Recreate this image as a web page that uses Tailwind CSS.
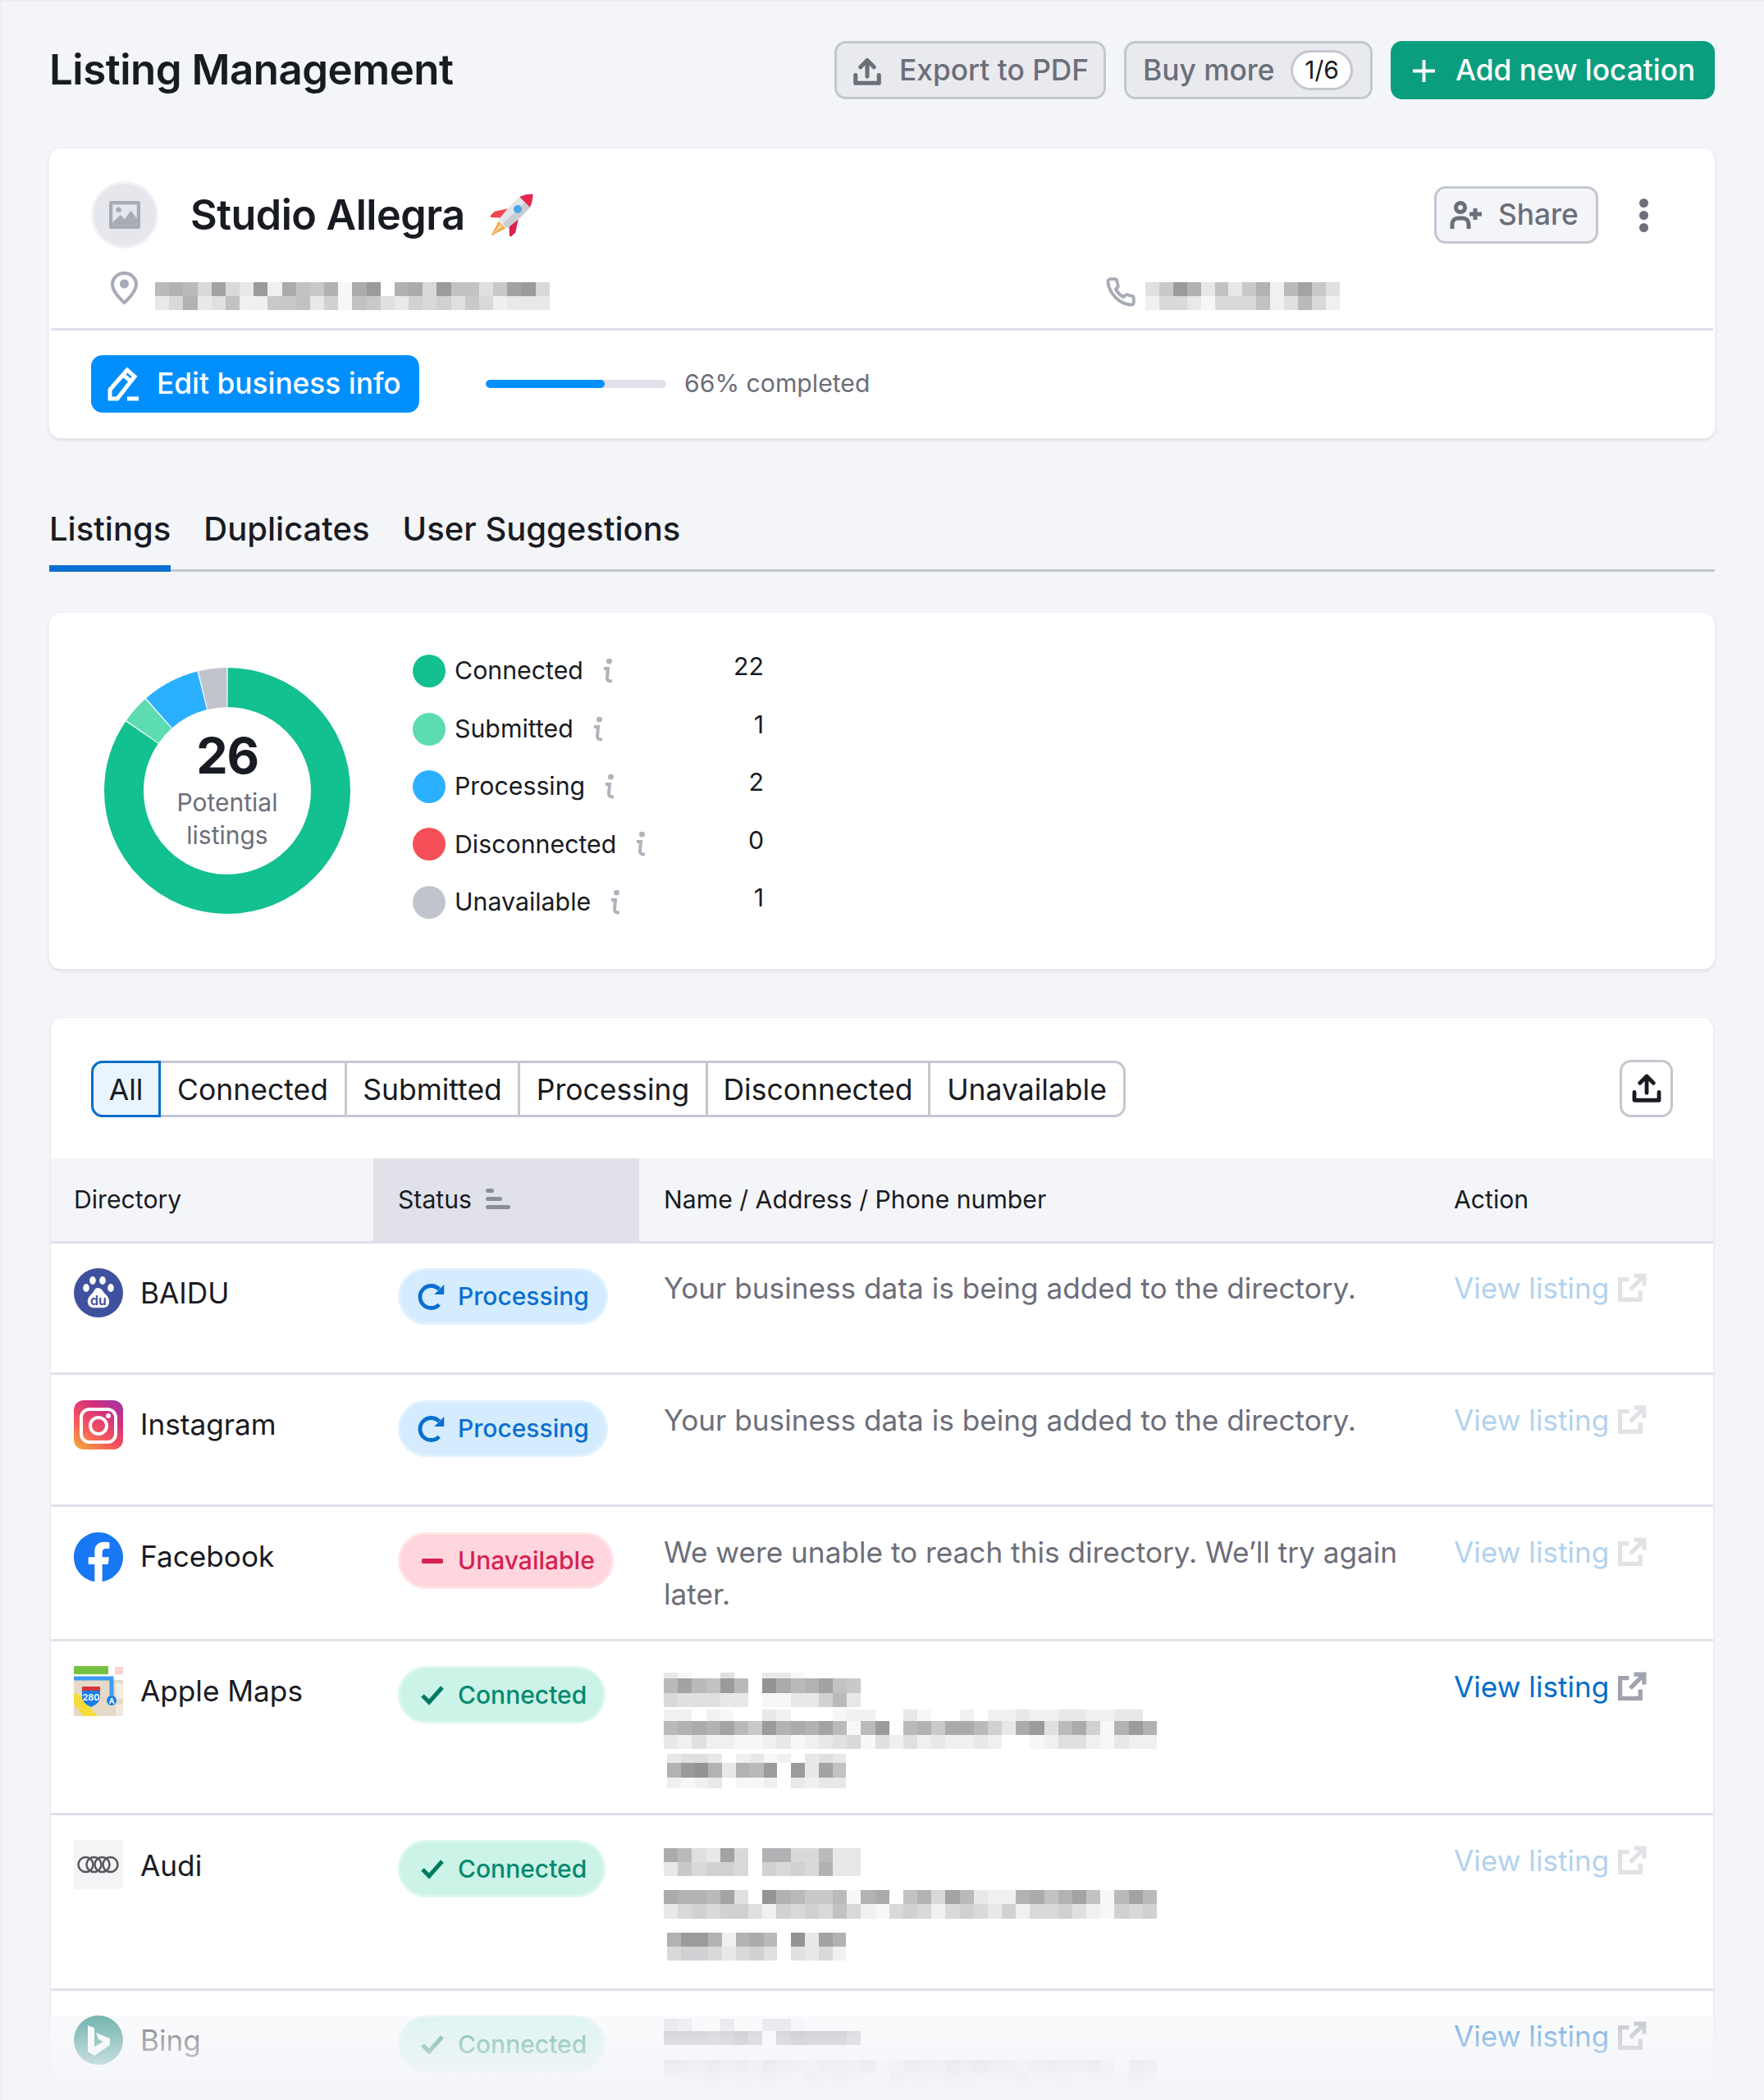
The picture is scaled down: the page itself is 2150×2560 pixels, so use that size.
<!DOCTYPE html>
<html lang="en">
  <head>
    <meta charset="UTF-8" />
    <title>Listing Management</title>
    <script src="https://cdn.jsdelivr.net/npm/@tailwindcss/browser@4"></script>
  </head>
  <body class="bg-[#f4f5f9] text-[#191b23] font-['Inter',sans-serif]">
    <main class="relative h-[2560px] overflow-hidden border-l-2 border-t-2 border-[#ebedf1] pl-[58px] pr-[60px] pt-[48px]">
      <!-- Page header -->
      <div class="flex h-[71px] items-center justify-between">
        <h1 class="text-[51px] font-semibold tracking-[-0.01em]">Listing Management</h1>
        <div class="flex items-center gap-[22px]">
          <button class="flex h-[71px] w-[331px] items-center gap-[21px] rounded-[14px] border-[3px] border-[#c4c7cf] bg-[#e9eaee] pl-[19px] pt-[2px] text-[35.300px] font-medium text-[#6c6e79]">
            <svg class="h-[38px] w-[36px]" viewBox="0 0 24 24" fill="none" stroke="#6c6e79" stroke-width="3.400" stroke-linecap="round" stroke-linejoin="round"><path d="M12 16V3M6.500 8.500 12 3l5.500 5.500M2.500 15v6.500h19V15" /></svg>
            Export to PDF
          </button>
          <button class="flex h-[71px] w-[303px] items-center justify-between rounded-[14px] border-[3px] border-[#c4c7cf] bg-[#e9eaee] pl-[20px] pr-[21px] text-[35.300px] font-medium text-[#6c6e79]">
            <span class="pt-[2px]">Buy more</span>
            <span class="flex h-[49px] w-[76px] items-center justify-center rounded-full border-[3px] border-[#c4c7cf] bg-white text-[30px] font-normal text-[#191b23]">1/6</span>
          </button>
          <button class="flex h-[71px] w-[395px] items-center gap-[25px] rounded-[14px] bg-[#0a9e7f] pl-[27px] pt-[2px] text-[35.300px] font-medium text-white">
            <svg class="h-[27px] w-[27px]" viewBox="0 0 24 24" fill="none" stroke="#fff" stroke-width="3.500"><path d="M12 0v24M0 12h24" /></svg>
            Add new location
          </button>
        </div>
      </div>

      <!-- Business card -->
      <section class="mt-[60px] h-[353px] rounded-[14px] border-2 border-white bg-white shadow-[0_0_0_1px_#eceef3,0_2px_4px_rgba(25,27,35,0.14)]">
        <div class="flex h-[220px] flex-col border-b-[3px] border-[#e0e1e9] pl-[49px] pr-[74px]">
          <div class="flex items-center pt-[38px]">
            <div class="flex h-[82px] w-[82px] items-center justify-center rounded-full border-[3px] border-[#f1f2f5] bg-[#e6e7ed]">
              <svg class="h-[38px] w-[38px]" viewBox="0 0 36 36"><rect x="0" y="2" width="36" height="32" rx="2" fill="#a8abb5" /><rect x="4" y="6" width="28" height="24" fill="#e6e7ed" /><circle cx="11" cy="12" r="3" fill="#a8abb5" /><path d="M4 27 13 18l5 5 7-10 7 9v8H4z" fill="#a8abb5" /></svg>
            </div>
            <h2 class="ml-[39px] text-[50.300px] font-semibold tracking-[-0.01em]">Studio Allegra</h2>
            <svg class="ml-[31px] h-[52px] w-[52px]" viewBox="0 0 52 52">
              <g transform="rotate(45 26 26)">
                <path d="M20 43h12l-6 19z" fill="#f2a03c" />
                <path d="M23 44l3 15 3-15z" fill="#f7cf8a" />
                <path d="M17 24 8 38v10l11-10z" fill="#f2484f" />
                <path d="M35 24l9 14v10L33 38z" fill="#dc1f4d" />
                <path d="M17 4h18c1 12 0 28-2 38H19c-2-10-3-26-2-38z" fill="#e3e5e9" />
                <path d="M26 4h9c1 12 0 28-2 38h-7z" fill="#c9ccd2" />
                <path d="M26-10c7 7 9 14 9 14H17s2-7 9-14z" fill="#e6284f" />
                <circle cx="26" cy="16" r="5" fill="#4ba5ec" />
              </g>
            </svg>
            <button class="ml-auto flex h-[70px] w-[200px] items-center gap-[20px] rounded-[14px] border-[3px] border-[#c4c7cf] bg-[#f4f5f9] pl-[15px] text-[35.300px] font-medium text-[#6c6e79]">
              <svg class="h-[34px] w-[40px]" viewBox="0 0 40 34" fill="none" stroke="#6c6e79" stroke-width="5"><circle cx="14" cy="8" r="5.500" /><path d="M4 34v-6a7 7 0 0 1 7-7h6a7 7 0 0 1 7 7v6" /><path d="M32 9v14M25 16h15" /></svg>
              Share
            </button>
            <div class="ml-[44px] flex w-[22px] flex-col items-center gap-[4px]">
              <span class="h-[11px] w-[11px] rounded-full bg-[#6c6e79]"></span>
              <span class="h-[11px] w-[11px] rounded-full bg-[#6c6e79]"></span>
              <span class="h-[11px] w-[11px] rounded-full bg-[#6c6e79]"></span>
            </div>
          </div>
          <div class="mt-[30px] flex">
            <div class="flex w-[1236px] items-start">
              <svg class="ml-[23px] mt-[-2px] h-[40px] w-[35px]" viewBox="0 0 35 40" fill="none" stroke="#a8abb5" stroke-width="4"><path d="M17.500 38C11 32 3 24 3 15.500a14.500 13.500 0 0 1 29 0C32 24 24 32 17.500 38z" /><circle cx="17.500" cy="15" r="3.500" fill="#a8abb5" /></svg>
              <div class="ml-[20px] mt-[11px]" data-mosaic="17:656a3ac2d4785e42f54a277b832a 17:ca5cb7dd887c9e78bc9a9b8adccc"></div>
            </div>
            <div class="flex items-start">
              <svg class="mt-[4px] h-[38px] w-[38px]" viewBox="0 0 24 24" fill="none" stroke="#a8abb5" stroke-width="2.400" stroke-linejoin="round"><path d="M22 16.920v3a2 2 0 0 1-2.180 2 19.790 19.790 0 0 1-8.630-3.070 19.500 19.500 0 0 1-6-6 19.790 19.790 0 0 1-3.070-8.670A2 2 0 0 1 4.110 2h3a2 2 0 0 1 2 1.720 12.840 12.840 0 0 0 .7 2.810 2 2 0 0 1-.45 2.110L8.090 9.910a16 16 0 0 0 6 6l1.270-1.270a2 2 0 0 1 2.110-.45 12.840 12.840 0 0 0 2.810.7A2 2 0 0 1 22 16.92z" /></svg>
              <div class="ml-[11px] mt-[11px]" data-mosaic="17:b825c7c85d638b 17:daaceaaa7db6ad" data-cell="16.900"></div>
            </div>
          </div>
        </div>
        <div class="flex h-[130px] items-center px-[49px]">
          <button class="flex h-[70px] w-[400px] items-center gap-[20px] rounded-[14px] bg-[#008ffd] pl-[20px] text-[35.300px] font-medium text-white">
            <svg class="h-[42px] w-[40px]" viewBox="0 0 40 42" fill="none" stroke="#fff" stroke-width="5"><path d="M3 39V28L24 4l9 8L12 39zM19 10l10 8M24 39h14" /></svg>
            Edit business info
          </button>
          <div class="ml-[81px] h-[10px] w-[220px] overflow-hidden rounded-full bg-[#e0e1e9]">
            <div class="h-full w-[66%] rounded-full bg-[#008ffd]"></div>
          </div>
          <span class="ml-[22px] text-[30.200px] text-[#6c6e79]">66% completed</span>
        </div>
      </section>

      <!-- Tabs -->
      <nav class="mt-[73px] flex h-[90px] gap-[40px] border-b-[3px] border-[#c4c7cf] text-[40px] font-medium leading-[76px]">
        <div class="relative">
          <span>Listings</span>
          <div class="absolute bottom-[-3px] left-0 h-[8px] w-full bg-[#0a6fd0]"></div>
        </div>
        <span>Duplicates</span>
        <span>User Suggestions</span>
      </nav>

      <!-- Summary card -->
      <section class="mt-[50px] flex h-[434px] rounded-[14px] border-2 border-white bg-white pl-[65px] pt-[65px] shadow-[0_0_0_1px_#eceef3,0_2px_4px_rgba(25,27,35,0.14)]">
        <div class="relative h-[300px] w-[300px]">
          <svg class="h-[300px] w-[300px]" viewBox="0 0 300 300" fill="none" stroke-width="48">
            <g transform="rotate(-90 150 150)">
              <circle cx="150" cy="150" r="126" pathLength="26" stroke="#13c08f" stroke-dasharray="21.960 4.040" stroke-dashoffset="-0.020" />
              <circle cx="150" cy="150" r="126" pathLength="26" stroke="#5cdcb0" stroke-dasharray="0.960 25.040" stroke-dashoffset="-22.020" />
              <circle cx="150" cy="150" r="126" pathLength="26" stroke="#2bb0ff" stroke-dasharray="1.960 24.040" stroke-dashoffset="-23.020" />
              <circle cx="150" cy="150" r="126" pathLength="26" stroke="#c1c4cd" stroke-dasharray="0.960 25.040" stroke-dashoffset="-25.020" />
            </g>
          </svg>
          <div class="absolute inset-0 flex flex-col items-center pt-[62px] text-center">
            <span class="text-[61px] font-bold leading-[90px] tracking-[-0.02em]">26</span>
            <span class="mt-[-8px] text-[30px] leading-[40px] text-[#6c6e79]">Potential<br />listings</span>
          </div>
        </div>
        <div class="ml-[76px] mt-[-31px] w-[428px] text-[30.300px]">
          <div class="flex h-[70.400px] items-center">
            <span class="h-[40px] w-[40px] rounded-full bg-[#13c08f]"></span>
            <span class="ml-[11px]">Connected</span>
            <svg class="ml-[22px] h-[30px] w-[16px]" viewBox="0 0 16 30" fill="none" stroke="#b0b3bc" stroke-width="4"><circle cx="9.500" cy="3" r="1.500" fill="#b0b3bc" /><path d="M3 12h5L7 24q0 3.500 6 3.500" /></svg>
            <span class="ml-auto mt-[-10px]">22</span>
          </div>
          <div class="flex h-[70.400px] items-center">
            <span class="h-[40px] w-[40px] rounded-full bg-[#5cdcb0]"></span>
            <span class="ml-[11px]">Submitted</span>
            <svg class="ml-[22px] h-[30px] w-[16px]" viewBox="0 0 16 30" fill="none" stroke="#b0b3bc" stroke-width="4"><circle cx="9.500" cy="3" r="1.500" fill="#b0b3bc" /><path d="M3 12h5L7 24q0 3.500 6 3.500" /></svg>
            <span class="ml-auto mt-[-10px]">1</span>
          </div>
          <div class="flex h-[70.400px] items-center">
            <span class="h-[40px] w-[40px] rounded-full bg-[#2bb0ff]"></span>
            <span class="ml-[11px]">Processing</span>
            <svg class="ml-[22px] h-[30px] w-[16px]" viewBox="0 0 16 30" fill="none" stroke="#b0b3bc" stroke-width="4"><circle cx="9.500" cy="3" r="1.500" fill="#b0b3bc" /><path d="M3 12h5L7 24q0 3.500 6 3.500" /></svg>
            <span class="ml-auto mt-[-10px]">2</span>
          </div>
          <div class="flex h-[70.400px] items-center">
            <span class="h-[40px] w-[40px] rounded-full bg-[#f54f58]"></span>
            <span class="ml-[11px]">Disconnected</span>
            <svg class="ml-[22px] h-[30px] w-[16px]" viewBox="0 0 16 30" fill="none" stroke="#b0b3bc" stroke-width="4"><circle cx="9.500" cy="3" r="1.500" fill="#b0b3bc" /><path d="M3 12h5L7 24q0 3.500 6 3.500" /></svg>
            <span class="ml-auto mt-[-10px]">0</span>
          </div>
          <div class="flex h-[70.400px] items-center">
            <span class="h-[40px] w-[40px] rounded-full bg-[#c1c4cd]"></span>
            <span class="ml-[11px]">Unavailable</span>
            <svg class="ml-[22px] h-[30px] w-[16px]" viewBox="0 0 16 30" fill="none" stroke="#b0b3bc" stroke-width="4"><circle cx="9.500" cy="3" r="1.500" fill="#b0b3bc" /><path d="M3 12h5L7 24q0 3.500 6 3.500" /></svg>
            <span class="ml-auto mt-[-10px]">1</span>
          </div>
        </div>
      </section>

      <!-- Directories table -->
      <section class="mt-[60px] rounded-t-[14px] border-x-2 border-t-2 border-[#eceef3] border-t-white bg-white shadow-[0_-1px_0_#eceef3]">
        <div class="flex h-[169px] items-start justify-between px-[49px] pt-[49px]">
          <div class="flex h-[70px] pt-[1px] text-[35.500px]">
            <span class="flex w-[85px] items-center justify-center rounded-l-[14px] border-[3px] border-[#006dca] bg-[#e9f5fe] pt-[2px]">All</span>
            <span class="flex w-[227px] items-center justify-center border-y-[3px] border-r-[3px] border-[#c4c7cf] pt-[2px]">Connected</span>
            <span class="flex w-[211px] items-center justify-center border-y-[3px] border-r-[3px] border-[#c4c7cf] pt-[2px]">Submitted</span>
            <span class="flex w-[229px] items-center justify-center border-y-[3px] border-r-[3px] border-[#c4c7cf] pt-[2px]">Processing</span>
            <span class="flex w-[271px] items-center justify-center border-y-[3px] border-r-[3px] border-[#c4c7cf] pt-[2px]">Disconnected</span>
            <span class="flex w-[238px] items-center justify-center rounded-r-[14px] border-y-[3px] border-r-[3px] border-[#c4c7cf] pt-[2px]">Unavailable</span>
          </div>
          <button class="flex h-[70px] w-[65px] items-center justify-center rounded-[14px] border-[3px] border-[#c4c7cf] bg-white">
            <svg class="h-[36px] w-[36px]" viewBox="0 0 24 24" fill="none" stroke="#191b23" stroke-width="3.200" stroke-linecap="round" stroke-linejoin="round"><path d="M12 15.500V2M6.500 7.500 12 2l5.500 5.500M2 15v6.500h20V15" /></svg>
          </button>
        </div>

        <div class="grid h-[104px] grid-cols-[393px_324px_963px_346px] border-b-[3px] border-[#e0e1e9] bg-[#f4f5f9] text-[30.200px]">
          <div class="flex items-center pl-[28px]">Directory</div>
          <div class="flex items-center gap-[17px] bg-[#e0e1e9] pl-[30px]">
            Status
            <div class="mt-[-2px] flex flex-col gap-[5px]">
              <span class="h-[5px] w-[10px] rounded-full bg-[#8b8e98]"></span>
              <span class="h-[5px] w-[20px] rounded-full bg-[#8b8e98]"></span>
              <span class="h-[5px] w-[30px] rounded-full bg-[#8b8e98]"></span>
            </div>
          </div>
          <div class="flex items-center pl-[30px]">Name / Address / Phone number</div>
          <div class="flex items-center pl-[30px]">Action</div>
        </div>

        <!-- BAIDU -->
        <div class="grid h-[160px] grid-cols-[393px_324px_963px_346px] border-b-[3px] border-[#e0e1e9] text-[35.200px] leading-[51px]">
          <div class="flex h-[90px] items-center gap-[21px] pl-[28px] pt-[30px]">
            <svg class="h-[60px] w-[60px]" viewBox="0 0 60 60"><circle cx="30" cy="30" r="30" fill="#3f519e" /><g fill="#fff"><ellipse cx="23" cy="15" rx="3.800" ry="5" /><ellipse cx="35" cy="15" rx="3.800" ry="5" /><ellipse cx="15" cy="24" rx="3.800" ry="5" /><ellipse cx="45" cy="24" rx="3.800" ry="5" /><path d="M29 24c4 0 6 3 8 6 3 3 7 7 6 12-1 6-6 7-13 6-7 1-12 0-13-6-1-5 3-9 6-12 2-3 3-6 6-6z" /></g><text x="30" y="45" text-anchor="middle" font-size="16" font-family="Inter" font-weight="600" fill="#3f519e">du</text></svg>
            <span>BAIDU</span>
          </div>
          <div class="pl-[30px] pt-[30px]">
            <span class="flex h-[69px] w-[256px] items-center gap-[13px] rounded-full border-[3px] border-[#e0f2ff] bg-[#d4ecfe] pl-[21px] text-[30px] font-medium text-[#0a6fd0]">
              <svg class="h-[36px] w-[36px] shrink-0" viewBox="0 0 24 24" fill="none" stroke="#0a6fd0" stroke-width="3.200"><path d="M17.500 5.800A9 9 0 1 0 17.500 18.200" /><path d="M21.500 2v8h-8z" fill="#0a6fd0" stroke="none" /></svg>
              Processing
            </span>
          </div>
          <div class="pl-[30px] pt-[29px] text-[#6c6e79]">Your business data is being added to the directory.</div>
          <div class="pl-[30px] pt-[29px]">
            <a class="flex items-center gap-[9px] text-[#006dca] opacity-30">View listing
              <svg class="h-[37px] w-[37px]" viewBox="0 0 24 24" fill="none" stroke="#a0a3ad" stroke-width="3.400"><path d="M10 5H3v16h16v-7" /><path d="M14 2h8v8M21.500 2.500 11 13" /></svg>
            </a>
          </div>
        </div>

        <!-- Instagram -->
        <div class="grid h-[161px] grid-cols-[393px_324px_963px_346px] border-b-[3px] border-[#e0e1e9] text-[35.200px] leading-[51px]">
          <div class="flex h-[91px] items-center gap-[21px] pl-[28px] pt-[31px]">
            <svg class="h-[60px] w-[60px]" viewBox="0 0 60 60">
              <defs><linearGradient id="ig" x1="0.100" y1="1" x2="0.800" y2="0"><stop offset="0" stop-color="#f4a53d" /><stop offset="0.400" stop-color="#f5535f" /><stop offset="0.750" stop-color="#d4317c" /><stop offset="1" stop-color="#a9339a" /></linearGradient></defs>
              <rect width="60" height="60" rx="12" fill="url(#ig)" />
              <rect x="9" y="11" width="42" height="40" rx="10" fill="none" stroke="#fff" stroke-width="4" />
              <circle cx="30" cy="31" r="10" fill="none" stroke="#fff" stroke-width="4" />
              <circle cx="42" cy="19" r="3" fill="#fff" />
            </svg>
            <span class="mt-[-2px]">Instagram</span>
          </div>
          <div class="pl-[30px] pt-[31px]">
            <span class="flex h-[69px] w-[256px] items-center gap-[13px] rounded-full border-[3px] border-[#e0f2ff] bg-[#d4ecfe] pl-[21px] text-[30px] font-medium text-[#0a6fd0]">
              <svg class="h-[36px] w-[36px] shrink-0" viewBox="0 0 24 24" fill="none" stroke="#0a6fd0" stroke-width="3.200"><path d="M17.500 5.800A9 9 0 1 0 17.500 18.200" /><path d="M21.500 2v8h-8z" fill="#0a6fd0" stroke="none" /></svg>
              Processing
            </span>
          </div>
          <div class="pl-[30px] pt-[30px] text-[#6c6e79]">Your business data is being added to the directory.</div>
          <div class="pl-[30px] pt-[30px]">
            <a class="flex items-center gap-[9px] text-[#006dca] opacity-30">View listing
              <svg class="h-[37px] w-[37px]" viewBox="0 0 24 24" fill="none" stroke="#a0a3ad" stroke-width="3.400"><path d="M10 5H3v16h16v-7" /><path d="M14 2h8v8M21.500 2.500 11 13" /></svg>
            </a>
          </div>
        </div>

        <!-- Facebook -->
        <div class="grid h-[164px] grid-cols-[393px_324px_963px_346px] border-b-[3px] border-[#e0e1e9] text-[35.200px] leading-[51px]">
          <div class="flex h-[91px] items-center gap-[21px] pl-[28px] pt-[31px]">
            <svg class="h-[60px] w-[60px]" viewBox="0 0 24 24"><path fill="#1877f2" d="M24 12.070C24 5.400 18.630 0 12 0S0 5.400 0 12.070c0 6.030 4.390 11.020 10.130 11.930v-8.440H7.080v-3.490h3.050V9.410c0-3.020 1.790-4.690 4.530-4.690 1.310 0 2.690.24 2.690.24v2.970h-1.520c-1.490 0-1.960.93-1.960 1.880v2.260h3.330l-.53 3.490h-2.800V24C19.610 23.090 24 18.100 24 12.070z" /></svg>
            <span class="mt-[-1px]">Facebook</span>
          </div>
          <div class="pl-[30px] pt-[31px]">
            <span class="flex h-[69px] w-[263px] items-center gap-[13px] rounded-full border-[3px] border-[#ffe4e8] bg-[#ffd6dd] pl-[21px] text-[30px] font-medium text-[#d62050]">
              <svg class="h-[36px] w-[36px] shrink-0" viewBox="0 0 36 36"><rect x="5" y="15" width="26" height="6" rx="2" fill="#d62050" /></svg>
              Unavailable
            </span>
          </div>
          <div class="pl-[30px] pr-[30px] pt-[30px] text-[#6c6e79]">We were unable to reach this directory. We’ll try again later.</div>
          <div class="pl-[30px] pt-[30px]">
            <a class="flex items-center gap-[9px] text-[#006dca] opacity-30">View listing
              <svg class="h-[37px] w-[37px]" viewBox="0 0 24 24" fill="none" stroke="#a0a3ad" stroke-width="3.400"><path d="M10 5H3v16h16v-7" /><path d="M14 2h8v8M21.500 2.500 11 13" /></svg>
            </a>
          </div>
        </div>

        <!-- Apple Maps -->
        <div class="grid h-[212px] grid-cols-[393px_324px_963px_346px] border-b-[3px] border-[#e0e1e9] text-[35.200px] leading-[51px]">
          <div class="flex h-[91px] items-center gap-[21px] pl-[28px] pt-[30px]">
            <svg class="h-[61px] w-[60px]" viewBox="0 0 60 61">
              <rect x="0" y="17" width="60" height="44" rx="2" fill="#e5dac6" />
              <rect x="0" y="0" width="42" height="10" rx="1" fill="#76c044" />
              <rect x="50" y="1" width="10" height="9" fill="#fbd3d0" />
              <path d="M0 15h46v30" fill="none" stroke="#3c9bf2" stroke-width="5" />
              <rect x="51" y="21" width="9" height="19" fill="#fff" opacity="0.500" />
              <rect x="51" y="47" width="9" height="14" fill="#fff" opacity="0.400" />
              <path d="M0 33c8 1 13 6 18 14 3 6 7 10 11 14H11C7 55 4 50 0 47z" fill="#f6dd3b" />
              <path d="M10 27h22v10c0 7-5 10-11 13-6-3-11-6-11-13z" fill="#1a7ee8" />
              <rect x="10" y="25" width="22" height="5" fill="#d5343b" />
              <text x="21" y="42" text-anchor="middle" font-size="11" font-family="Inter" font-weight="600" fill="#fff">280</text>
              <circle cx="46" cy="42" r="6" fill="#1a7ee8" />
              <text x="46" y="46" text-anchor="middle" font-size="9" font-family="Inter" font-weight="700" fill="#fff">A</text>
            </svg>
            <span>Apple Maps</span>
          </div>
          <div class="pl-[30px] pt-[30px]">
            <span class="flex h-[70px] w-[253px] items-center gap-[13px] rounded-full border-[3px] border-[#dcf7f0] bg-[#ccf3e8] pl-[21px] text-[30px] font-medium text-[#058a6d]">
              <svg class="h-[36px] w-[36px] shrink-0" viewBox="0 0 36 36" fill="none" stroke="#007b62" stroke-width="5"><path d="M6 19l8 8L30 9" /></svg>
              Connected
            </span>
          </div>
          <div class="pl-[30px] pt-[38px]">
            <div data-mosaic="7:ceffbffcceffff 18:636726f1465378 17:abbbccfeecc96c"></div>
            <div class="mt-[3px]" data-mosaic="14:ddfdeffcdfffeddffceffdfddcddccddccf 17:654536825453 6e62f6584469c42b649e525 17:cdbddeedcedcbaebdbdcddcdffedbbdecdd"></div>
            <div class="ml-[4px] mt-[6px]" data-mosaic="11:cbbcfdcedfcbc 18:5215c562f2c37 13:dedcfeedfcdcc" data-cell="16.800"></div>
          </div>
          <div class="pl-[30px] pt-[30px]">
            <a class="flex items-center gap-[9px] text-[#006dca]">View listing
              <svg class="h-[37px] w-[37px]" viewBox="0 0 24 24" fill="none" stroke="#a0a3ad" stroke-width="3.400"><path d="M10 5H3v16h16v-7" /><path d="M14 2h8v8M21.500 2.500 11 13" /></svg>
            </a>
          </div>
        </div>

        <!-- Audi -->
        <div class="grid h-[214px] grid-cols-[393px_324px_963px_346px] border-b-[3px] border-[#e0e1e9] text-[35.200px] leading-[51px]">
          <div class="flex h-[90px] items-center gap-[21px] pl-[28px] pt-[30px]">
            <svg class="h-[60px] w-[60px]" viewBox="0 0 60 60"><rect width="60" height="60" rx="3" fill="#f3f4f6" /><g fill="none" stroke="#56575c" stroke-width="2.500"><circle cx="14.500" cy="30" r="9" /><circle cx="24.500" cy="30" r="9" /><circle cx="34.500" cy="30" r="9" /><circle cx="44.500" cy="30" r="9" /></g></svg>
            <span class="mt-[2px]">Audi</span>
          </div>
          <div class="pl-[30px] pt-[30px]">
            <span class="flex h-[70px] w-[253px] items-center gap-[13px] rounded-full border-[3px] border-[#dcf7f0] bg-[#ccf3e8] pl-[21px] text-[30px] font-medium text-[#058a6d]">
              <svg class="h-[36px] w-[36px] shrink-0" viewBox="0 0 36 36" fill="none" stroke="#007b62" stroke-width="5"><path d="M6 19l8 8L30 9" /></svg>
              Connected
            </span>
          </div>
          <div class="pl-[30px] pt-[40px]">
            <div data-mosaic="17:46bc3af55aa6cc 17:c8a99af9a9a5cc"></div>
            <div class="mt-[17px]" data-mosaic="17:45563bf156886e54f75a36cdd547537e636 18:ca9a99bd9a9a7adea9ada9ac9daa9bde9a9"></div>
            <div class="ml-[4px] mt-[17px]" data-mosaic="17:5225d546f1c35 17:a99aca9bfbcad" data-cell="16.800"></div>
          </div>
          <div class="pl-[30px] pt-[30px]">
            <a class="flex items-center gap-[9px] text-[#006dca] opacity-30">View listing
              <svg class="h-[37px] w-[37px]" viewBox="0 0 24 24" fill="none" stroke="#a0a3ad" stroke-width="3.400"><path d="M10 5H3v16h16v-7" /><path d="M14 2h8v8M21.500 2.500 11 13" /></svg>
            </a>
          </div>
        </div>

        <!-- Bing -->
        <div class="grid h-[200px] grid-cols-[393px_324px_963px_346px] text-[35.200px] leading-[51px]">
          <div class="flex h-[90px] items-center gap-[21px] pl-[28px] pt-[30px]">
            <svg class="h-[60px] w-[60px]" viewBox="0 0 60 60"><circle cx="30" cy="30" r="30" fill="#0a7f73" /><path d="M17 12l8 3v23l11-6-6-3-3-8 17 7v8L25 49l-8-5z" fill="#fff" /></svg>
            <span>Bing</span>
          </div>
          <div class="pl-[30px] pt-[30px]">
            <span class="flex h-[70px] w-[253px] items-center gap-[13px] rounded-full border-[3px] border-[#dcf7f0] bg-[#ccf3e8] pl-[21px] text-[30px] font-medium text-[#058a6d]">
              <svg class="h-[36px] w-[36px] shrink-0" viewBox="0 0 36 36" fill="none" stroke="#007b62" stroke-width="5"><path d="M6 19l8 8L30 9" /></svg>
              Connected
            </span>
          </div>
          <div class="pl-[30px] pt-[34px]">
            <div data-mosaic="15:bcffbffbbeffff 17:5556536f534447"></div>
            <div class="mt-[18px]" data-mosaic="16:89a8a9b8abcabb9ec9ab8a8abca9ab9cf9a 18:bcb9cab9bd9b8cdd9bac9abcb9cbaebcd8b"></div>
          </div>
          <div class="pl-[30px] pt-[30px]">
            <a class="flex items-center gap-[9px] text-[#006dca]">View listing
              <svg class="h-[37px] w-[37px]" viewBox="0 0 24 24" fill="none" stroke="#a0a3ad" stroke-width="3.400"><path d="M10 5H3v16h16v-7" /><path d="M14 2h8v8M21.500 2.500 11 13" /></svg>
            </a>
          </div>
        </div>
      </section>

      <!-- Bottom fade over the table -->
      <div class="absolute inset-x-0 bottom-0 h-[103px] bg-linear-to-b from-[#f4f5f9]/45 to-[#f4f5f9] to-90%"></div>
    </main>

    <script>
      // draws the blurred-out text blocks, one hex digit per cell (0 dark, f blank)
      document.querySelectorAll("[data-mosaic]").forEach((el) => {
        const cell = Number(el.dataset.cell || 17.17);
        const parts = el.dataset.mosaic.match(/\d+:[^:]*?(?=\s+\d+:|$)/g);
        let rects = "";
        let y = 0;
        let cols = 0;
        parts.forEach((part) => {
          const [h, raw] = part.split(":");
          const cells = raw.replace(/\s/g, "");
          cols = Math.max(cols, cells.length);
          [...cells].forEach((c, i) => {
            const v = Math.round(140 + parseInt(c, 16) * 7.67);
            if (c !== "f") rects += `<rect x="${i * cell}" y="${y}" width="${cell}" height="${h}" fill="rgb(${v},${v},${v + 3})"/>`;
          });
          y += Number(h);
        });
        el.innerHTML = `<svg width="${cols * cell}" height="${y}" shape-rendering="crispEdges">${rects}</svg>`;
      });
    </script>
  </body>
</html>
